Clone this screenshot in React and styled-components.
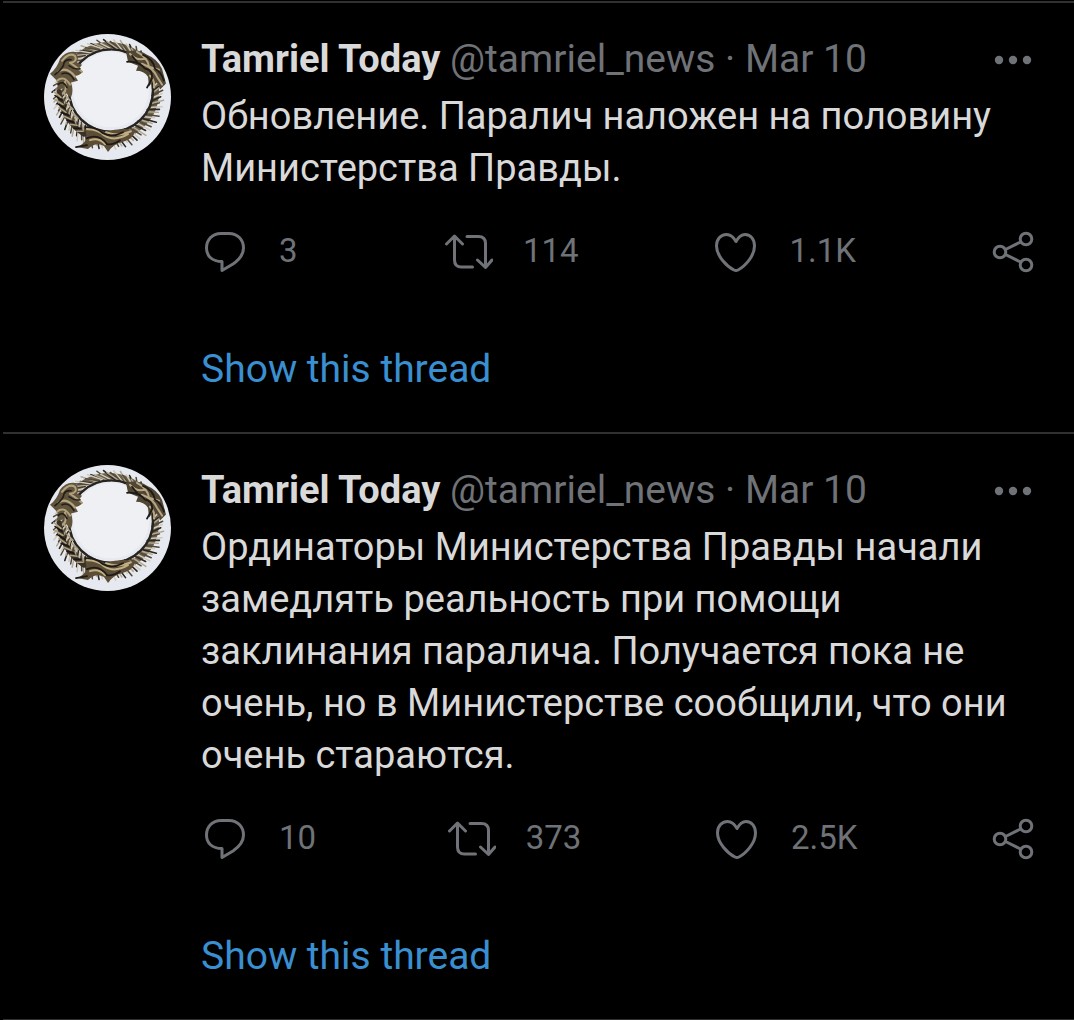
import React from "react";
import styled, { createGlobalStyle } from "styled-components";

const GlobalStyle = createGlobalStyle`
  * { box-sizing: border-box; }
  body {
    margin: 0;
    background: #000;
    color: #d9d9d9;
    font-family: Roboto, "Noto Sans", sans-serif;
    font-size: 39px;
    line-height: 52px;
  }
`;

const Timeline = styled.main`
  padding: 1px 0 0 3px;
`;

const TimelineEnd = styled.hr`
  height: 1px;
  margin: 0;
  border: 0;
  background: #2f3031;
`;

const Tweet = styled.article`
  display: flex;
  align-items: flex-start;
  gap: 30px;
  padding: 30px 37px 37px 41px;
  border-top: 2px solid #2f3031;
`;

const Avatar = styled.svg`
  flex: none;
  width: 127px;
  height: 126px;
  margin-top: 1px;
  border-radius: 50%;
`;

const Content = styled.div`
  flex: 1;
  min-width: 0;
`;

const Header = styled.header`
  display: flex;
  align-items: center;
  margin-bottom: 5px;
`;

const Byline = styled.div`
  flex: 1;
  color: #6f7277;
  white-space: nowrap;
`;

const Name = styled.a`
  color: #d9d9d9;
  font-size: 38px;
  font-weight: 700;
  text-decoration: none;
`;

const Handle = styled.a`
  color: inherit;
  text-decoration: none;
`;

const Text = styled.p`
  margin: 0 0 38px;
  font-size: 38px;
`;

const Actions = styled.div`
  display: flex;
  justify-content: space-between;
  align-items: center;
  height: 40px;
  margin-bottom: 71px;
`;

const Action = styled.button`
  display: flex;
  align-items: center;
  gap: 30px;
  padding: 0;
  border: 0;
  background: none;
  color: #6f7277;
  font-family: inherit;
  font-size: 33px;
  line-height: 40px;
  cursor: pointer;
`;

const Count = styled.span`
  min-width: 33px;
  padding-bottom: 2px;
  text-align: left;
`;

const Icon = styled.svg`
  flex: none;
  width: 48px;
  height: 48px;
  fill: none;
  stroke: currentColor;
  stroke-width: 3;
  stroke-linecap: round;
  stroke-linejoin: round;
`;

const ThreadLink = styled.a`
  display: block;
  width: fit-content;
  color: #3a8fd0;
  text-decoration: none;
`;

const ReplyIcon = () => (
  <Icon viewBox="0 0 48 48" aria-hidden="true">
    <path d="M20 5.500H28C37 5.500 42.500 12 42.500 20C42.500 27 38.500 31.500 32 36L21 42.500V33.500C11 33.500 5.500 28 5.500 20C5.500 12 11 5.500 20 5.500Z" />
  </Icon>
);

const RetweetIcon = () => (
  <Icon viewBox="0 0 48 48" aria-hidden="true">
    <path d="M1.500 16L9.500 8L17.500 16M9.500 9V32Q9.500 39 16.500 39H27.500M22 8.500H33.500Q40.500 8.500 40.500 15.500V39M32.500 32L40.500 39.500L47 32" />
  </Icon>
);

const LikeIcon = () => (
  <Icon viewBox="0 0 48 48" aria-hidden="true">
    <path d="M24 13.500C21.500 9 18.500 6.500 14.500 6.500C8.500 6.500 4.500 11.500 4.500 18C4.500 28 15 38.500 22 42Q24 43 26 42C33 38.500 42.500 28 42.500 18C42.500 11.500 39 6.500 33 6.500C29.500 6.500 26.500 9 24 13.500Z" />
  </Icon>
);

const ShareIcon = () => (
  <Icon viewBox="0 0 48 48" aria-hidden="true">
    <circle cx="11" cy="24" r="5.800" />
    <circle cx="37" cy="11" r="5.800" />
    <circle cx="37" cy="37" r="5.800" />
    <path d="M16.500 21.500L31.500 14M16.500 26.500L31.500 34" />
  </Icon>
);

const MoreIcon = () => (
  <Icon viewBox="0 0 48 48" aria-hidden="true">
    <g fill="currentColor" stroke="none">
      <circle cx="10" cy="25" r="4.200" />
      <circle cx="24" cy="25" r="4.200" />
      <circle cx="38" cy="25" r="4.200" />
    </g>
  </Icon>
);

// Scales of the serpent ring: each barb leans back from the inner to the outer rim.
const barbs = Array.from({ length: 104 }, (_, i) => {
  const a = (i / 104) * Math.PI * 2;
  const lean = a - 0.2;
  const inner = 43 + Math.sin(i * 5.3);
  const outer = 54 + Math.cos(i * 3.7) * 2;
  const x1 = 66 + Math.cos(a) * inner;
  const y1 = 57 + Math.sin(a) * (inner - 1);
  const x2 = 64 + Math.cos(lean) * outer;
  const y2 = 61 + Math.sin(lean) * outer;
  return `M${x1.toFixed(1)} ${y1.toFixed(1)}L${x2.toFixed(1)} ${y2.toFixed(1)}`;
});
const pick = (n) => barbs.filter((_, i) => i % 4 === n).join("");

const OuroborosAvatar = () => (
  <Avatar viewBox="0 0 127 127" preserveAspectRatio="none" role="img" aria-label="Tamriel Today">
    <rect width="127" height="127" fill="#e6e9ef" />
    <ellipse cx="67" cy="56" rx="38" ry="38" fill="#eef0f3" />
    <g fill="none" strokeLinecap="round">
      <ellipse cx="65" cy="58" rx="47" ry="47" stroke="#6b604c" strokeWidth="6" />
      <path d={pick(0)} stroke="#2b2723" strokeWidth="1.600" />
      <path d={pick(1)} stroke="#b3a88f" strokeWidth="1.500" />
      <path d={pick(2)} stroke="#51483a" strokeWidth="1.500" />
      <path d={pick(3)} stroke="#d0c9b8" strokeWidth="1.500" />
      <ellipse cx="67" cy="57" rx="42" ry="41.500" stroke="#27231f" strokeWidth="2.500" />
      <path d="M15 58C17 76 25 91 40 101" stroke="#3b3227" strokeWidth="5" />
      <path d="M10 58L17 64M11 66L19 71M15 74L22 79M20 83L27 86M26 91L33 92M33 98L39 98M20 60L26 67M23 70L29 76M28 79L34 85" stroke="#b09f7c" strokeWidth="1.700" />
      <path d="M11 62L18 67M13 70L21 75M17 79L25 82M23 87L30 89M30 95L37 95" stroke="#171614" strokeWidth="1.500" />
    </g>
    <g strokeLinecap="round" strokeLinejoin="round">
      <path d="M6 40Q13 35 16 25Q22 17 30 18Q36 22 33 29L38 31L35 35L39 38Q34 43 31 42L34 47L27 49Q30 57 27 64Q22 61 20 55L12 56Q16 50 12 46Z" fill="#61543d" />
      <path d="M18 27Q25 18 31 22Q34 28 26 29Q32 33 38 38M14 38Q23 32 31 43M13 47Q20 41 26 51M21 48Q23 54 20 60" fill="none" stroke="#b4a27d" strokeWidth="2" />
      <path d="M11 41Q20 34 20 29Q22 25 27 26M18 40Q25 37 30 46M14 51Q19 46 23 54M25 32Q30 36 36 35" fill="none" stroke="#211e19" strokeWidth="1.600" />
      <path d="M82 18Q94 14 103 21Q113 25 118 35L122 50L116 56Q114 47 109 48L105 53L104 43Q100 37 92 37L94 32L84 28Z" fill="#514633" />
      <path d="M86 20Q92 27 101 25M93 18Q104 24 105 33L115 36M98 30Q109 34 113 43L118 51M106 42Q111 46 110 54" fill="none" stroke="#b7a682" strokeWidth="2" />
      <path d="M83 28Q95 27 101 35Q109 36 108 45L103 54M99 21Q109 25 111 35Q117 38 120 47M88 22L93 28" fill="none" stroke="#1c1a17" strokeWidth="1.800" />
      <path d="M33 114Q40 111 43 105L41 96Q50 93 61 99Q77 94 91 97Q90 106 78 109Q69 111 64 119L60 113Q52 108 44 116Z" fill="#5b4d36" />
      <path d="M43 96Q54 96 60 102Q70 109 84 101M46 107Q55 104 61 111M62 99Q73 104 87 98" fill="none" stroke="#c0ae84" strokeWidth="2" />
      <path d="M41 94Q51 93 59 100Q68 105 79 99M43 105Q55 100 63 111Q69 112 76 107M32 114L43 112" fill="none" stroke="#1e1a16" strokeWidth="1.800" />
    </g>
  </Avatar>
);

const tweets = [
  {
    id: 1,
    text: "Обновление. Паралич наложен на половину Министерства Правды.",
    replies: "3",
    retweets: "114",
    likes: "1.1K",
  },
  {
    id: 2,
    text: "Ординаторы Министерства Правды начали замедлять реальность при помощи заклинания паралича. Получается пока не очень, но в Министерстве сообщили, что они очень стараются.",
    replies: "10",
    retweets: "373",
    likes: "2.5K",
  },
];

export default function App() {
  return (
    <>
      <GlobalStyle />
      <Timeline>
        {tweets.map((t) => (
          <Tweet key={t.id}>
            <OuroborosAvatar />
            <Content>
              <Header>
                <Byline>
                  <Name href="#profile">Tamriel Today</Name>{" "}
                  <Handle href="#profile">@tamriel_news</Handle> · <time>Mar 10</time>
                </Byline>
                <Action type="button" aria-label="More">
                  <MoreIcon />
                </Action>
              </Header>
              <Text>{t.text}</Text>
              <Actions>
                <Action type="button" aria-label={`Reply, ${t.replies}`}>
                  <ReplyIcon />
                  <Count>{t.replies}</Count>
                </Action>
                <Action type="button" aria-label={`Retweet, ${t.retweets}`}>
                  <RetweetIcon />
                  <Count>{t.retweets}</Count>
                </Action>
                <Action type="button" aria-label={`Like, ${t.likes}`}>
                  <LikeIcon />
                  <Count>{t.likes}</Count>
                </Action>
                <Action type="button" aria-label="Share">
                  <ShareIcon />
                </Action>
              </Actions>
              <ThreadLink href="#thread">Show this thread</ThreadLink>
            </Content>
          </Tweet>
        ))}
        <TimelineEnd />
      </Timeline>
    </>
  );
}
